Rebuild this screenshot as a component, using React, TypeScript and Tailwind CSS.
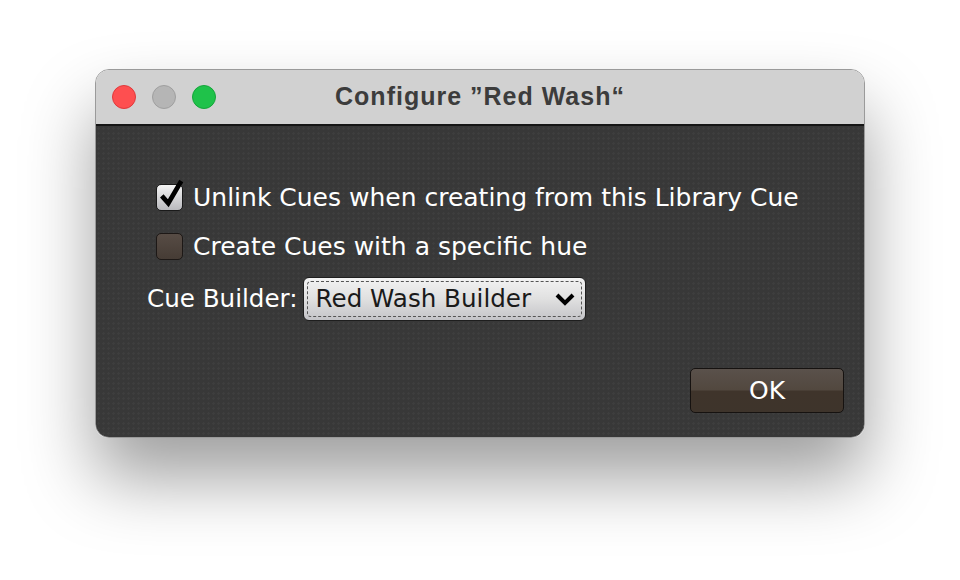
import React from 'react';

const ui = { fontFamily: '"DejaVu Sans", "Liberation Sans", sans-serif' };

function TrafficLights() {
  return (
    <div className="flex items-center gap-4 pl-[16px]">
      <span className="w-6 h-6 rounded-full bg-[#fe4f50] border border-[#e0393b]" />
      <span className="w-6 h-6 rounded-full bg-[#b5b5b5] border border-[#9f9f9f]" />
      <span className="w-6 h-6 rounded-full bg-[#1fc24a] border border-[#15a53a]" />
    </div>
  );
}

function Checkbox({ checked }: { checked?: boolean }) {
  if (checked) {
    return (
      <span className="relative shrink-0 w-[27px] h-[27px] rounded-[5px] border border-[#1a1a1a] bg-gradient-to-b from-[#f4f4f4] to-[#b9b9bd]">
        <svg viewBox="0 0 28 32" className="absolute left-[2px] -top-[6px] w-[26px] h-[30px]">
          <path d="M3 18 L10 26 L24 2" fill="none" stroke="#000" strokeWidth="5" strokeLinejoin="miter" />
        </svg>
      </span>
    );
  }
  return <span className="shrink-0 w-[27px] h-[27px] rounded-[5px] border border-[#1d1816] bg-gradient-to-b from-[#574c45] to-[#463c35]" />;
}

export default function App() {
  return (
    <div className="w-[960px] h-[580px] bg-white flex justify-center pt-[69px]" style={ui}>
      <div className="w-[770px] h-[369px] rounded-[14px] overflow-hidden flex flex-col border border-[#9a9a9a] shadow-[0_40px_70px_rgba(0,0,0,0.38)]">
        <div className="h-[56px] shrink-0 bg-[#d1d1d1] border-b-2 border-[#161616] flex items-center relative">
          <TrafficLights />
          <div
            className="absolute inset-0 flex items-center justify-center text-[25px] tracking-[1px] font-bold text-[#3c3c3c]"
            style={{ fontFamily: '"Liberation Sans", Arial, sans-serif' }}
          >
            Configure ”Red Wash“
          </div>
        </div>
        <div className="flex-1 bg-[#383838] bg-[radial-gradient(#3e3e3e_1px,transparent_1.5px)] bg-[length:5px_5px] text-white flex flex-col pl-[51px] pr-[20px] pt-[56px]">
          <div className="flex items-center gap-[10px] h-[30px] pl-[9px]">
            <Checkbox checked />
            <span className="text-[25px] leading-none whitespace-nowrap">Unlink Cues when creating from this Library Cue</span>
          </div>
          <div className="flex items-center gap-[10px] h-[30px] mt-[19px] pl-[9px]">
            <Checkbox />
            <span className="text-[25px] leading-none whitespace-nowrap">Create Cues with a specific hue</span>
          </div>
          <div className="flex items-center gap-[5px] mt-[16px]">
            <span className="text-[24.6px] leading-none whitespace-nowrap">Cue Builder:</span>
            <div className="w-[283px] h-[44px] rounded-[6px] border border-[#1e1e1e] bg-gradient-to-b from-[#f3f3f3] via-[#e0e0e0] to-[#c4c4c8] p-[3px]">
              <div className="w-full h-full rounded-[4px] border border-dashed border-[#555] flex items-center justify-between pl-[8px] pr-[5px] text-[#1a1a1a]">
                <span className="text-[24.6px] leading-none whitespace-nowrap">Red Wash Builder</span>
                <svg viewBox="0 0 22 16" className="w-[22px] h-[16px]">
                  <path d="M3 4 L11 12 L19 4" fill="none" stroke="#000" strokeWidth="4" />
                </svg>
              </div>
            </div>
          </div>
          <div className="flex justify-end mt-[47px]">
            <button className="w-[154px] h-[45px] rounded-[5px] border border-[#161210] bg-[linear-gradient(#5a514b_0%,#52483f_48%,#3f342b_52%,#3e342b_100%)] text-white text-[25px]">
              OK
            </button>
          </div>
        </div>
      </div>
    </div>
  );
}
